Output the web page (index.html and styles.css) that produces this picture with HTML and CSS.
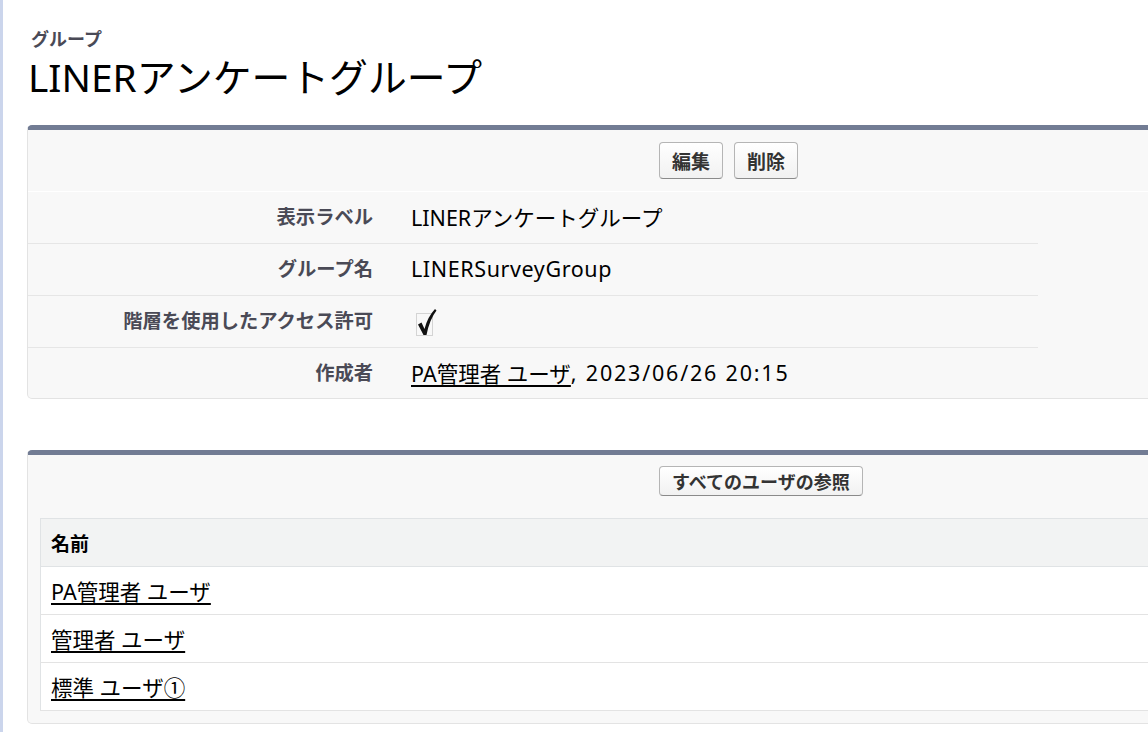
FILE: index.html
```html
<!DOCTYPE html>
<html lang="ja">
<head>
<meta charset="utf-8">
<title>グループ</title>
<link rel="stylesheet" href="styles.css">
</head>
<body>
<div class="page">
  <div class="page-head">
    <div class="page-type">グループ</div>
    <h1 class="page-title">LINERアンケートグループ</h1>
  </div>

  <div class="panel">
    <div class="panel-buttons">
      <button class="btn btn-tall">編集</button>
      <button class="btn btn-tall">削除</button>
    </div>
    <div class="detail">
      <div class="detail-row">
        <div class="detail-label">表示ラベル</div>
        <div class="detail-value">LINERアンケートグループ</div>
      </div>
      <div class="detail-row">
        <div class="detail-label">グループ名</div>
        <div class="detail-value latin">LINERSurveyGroup</div>
      </div>
      <div class="detail-row">
        <div class="detail-label">階層を使用したアクセス許可</div>
        <div class="detail-value">
          <svg class="checkbox" width="26" height="30" viewBox="0 0 26 30">
            <rect x="3.5" y="7.5" width="16" height="22" fill="none" stroke="#b0b0b0" stroke-width="1" stroke-dasharray="1 1"/>
            <path d="M5 18.5 L8.5 16.5 L11.5 23 Q14.5 11 22 3 L23.5 4.5 Q16.5 13.5 13.5 29 L10.5 29 Z" fill="#111"/>
          </svg>
        </div>
      </div>
      <div class="detail-row">
        <div class="detail-label">作成者</div>
        <div class="detail-value"><a href="#" class="link">PA管理者 ユーザ</a><span class="stamp">, 2023/06/26 20:15</span></div>
      </div>
    </div>
  </div>

  <div class="panel panel-related">
    <div class="panel-buttons panel-buttons-small">
      <button class="btn btn-small">すべてのユーザの参照</button>
    </div>
    <table class="list">
      <thead>
        <tr><th>名前</th></tr>
      </thead>
      <tbody>
        <tr><td><a href="#" class="link">PA管理者 ユーザ</a></td></tr>
        <tr><td><a href="#" class="link">管理者 ユーザ</a></td></tr>
        <tr><td><a href="#" class="link">標準 ユーザ①</a></td></tr>
      </tbody>
    </table>
  </div>
</div>
</body>
</html>
```

FILE: styles.css
```css
html, body {
  margin: 0;
  padding: 0;
  background: #ffffff;
  overflow: hidden;
}

body {
  font-family: "Noto Sans", "Noto Sans CJK JP", sans-serif;
  color: #111;
  border-left: 3px solid #cbd5ec;
  min-height: 732px;
  box-sizing: border-box;
}

.page {
  padding: 26px 0 0 24px;
  width: 1400px;
}

.page-head {
  padding-left: 1px;
}

.page-type {
  font-size: 18px;
  font-weight: 700;
  color: #4a4a56;
  line-height: 26px;
  padding-left: 3px;
}

.page-title {
  margin: 0;
  font-size: 38.8px;
  font-weight: 400;
  line-height: 50px;
  color: #000;
}

.panel {
  margin-top: 23px;
  background: #f8f8f8;
  border: 1px solid #e3e3e3;
  border-top: 5px solid #727c94;
  border-radius: 5px;
}

.panel-buttons {
  display: flex;
  gap: 11px;
  padding: 12px 0 12px 631px;
  border-bottom: 1px solid #ffffff;
}

.btn {
  font-family: "Noto Sans CJK JP", sans-serif;
  font-weight: 700;
  color: #333;
  background: linear-gradient(#ffffff, #f1f1f1);
  border: 1px solid #b5b5b5;
  border-bottom-color: #8a8a8a;
  border-radius: 4px;
  cursor: pointer;
}

.btn-tall {
  font-size: 19px;
  height: 37px;
  padding: 0 12px;
}

.btn-small {
  font-size: 18px;
  height: 30px;
  padding: 0 12px;
  line-height: 26px;
}

.detail {
  width: 1010px;
}

.detail-row {
  display: flex;
  align-items: center;
  height: 51px;
  border-bottom: 1px solid #e6e6e6;
}

.detail-row:last-child {
  border-bottom: none;
  height: 50px;
}

.detail-label {
  width: 345px;
  text-align: right;
  font-size: 19.3px;
  font-weight: 700;
  color: #4a4a56;
  padding-bottom: 3px;
}

.detail-value {
  padding-left: 38px;
  padding-bottom: 2px;
  font-size: 21.5px;
  color: #000;
  display: flex;
  align-items: center;
}

.latin {
  letter-spacing: 0.6px;
}

.stamp {
  letter-spacing: 1.8px;
}

.checkbox {
  display: block;
  margin-left: 2px;
}

.link {
  color: #000;
  text-decoration: underline;
  text-underline-offset: 3px;
}

.panel-related {
  margin-top: 51px;
  padding-bottom: 12px;
}

.panel-buttons-small {
  padding: 11px 0 22px 631px;
  border-bottom: none;
}

.list {
  margin-left: 12px;
  width: calc(100% - 12px);
  border-collapse: collapse;
  background: #fff;
  border: 1px solid #e0e3e5;
}

.list th {
  background: #f2f3f3;
  text-align: left;
  font-size: 19px;
  font-weight: 700;
  color: #000;
  height: 47px;
  padding: 0 0 0 10px;
  border-bottom: 1px solid #e0e3e5;
}

.list td {
  font-size: 21.5px;
  height: 47px;
  padding: 0 0 0 10px;
  border-bottom: 1px solid #e3e3e3;
}
```
